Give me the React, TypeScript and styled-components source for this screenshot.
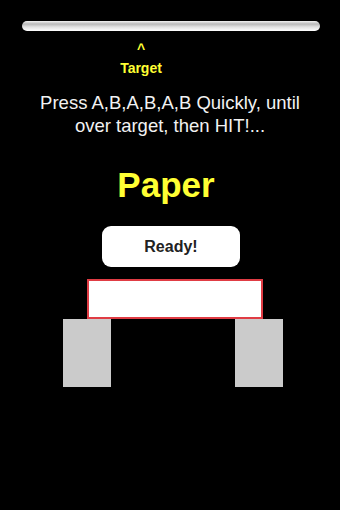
import React from 'react'
import styled, { createGlobalStyle } from 'styled-components'

const Global = createGlobalStyle`
  html, body {
    margin: 0;
    padding: 0;
    background: #000;
  }
  body {
    font-family: 'Liberation Sans', Arial, sans-serif;
  }
`

const Screen = styled.div`
  width: 340px;
  height: 510px;
  background: #000;
  display: flex;
  flex-direction: column;
  overflow: hidden;
`

const Meter = styled.div`
  margin: 21px 20px 0 22px;
  height: 10px;
  border-radius: 5px;
  background: linear-gradient(#f4f4f4 0%, #b9b9b9 30%, #e2e2e2 60%, #ffffff 100%);
`

const Marker = styled.div`
  width: 44px;
  margin: 11px 0 0 119px;
  display: flex;
  flex-direction: column;
  align-items: center;
  color: #ffff33;
  font-weight: bold;
  font-size: 14px;
  line-height: 14px;
  .label {
    margin-top: 5px;
  }
`

const Hint = styled.div`
  margin-top: 16px;
  text-align: center;
  color: #f2f2f2;
  font-size: 18.5px;
  line-height: 23px;
  white-space: nowrap;
`

const Word = styled.div`
  margin-top: 28px;
  padding-right: 8px;
  text-align: center;
  color: #ffff33;
  font-weight: bold;
  font-size: 35px;
  line-height: 40px;
`

const ReadyButton = styled.button`
  align-self: flex-start;
  margin: 21px 0 0 102px;
  width: 138px;
  height: 41px;
  border: none;
  border-radius: 9px;
  background: #fff;
  color: #222;
  font-family: 'Liberation Sans', Arial, sans-serif;
  font-weight: bold;
  font-size: 16px;
  padding: 0;
`

const Stand = styled.div`
  margin: 12px 0 0 63px;
  width: 220px;
  display: flex;
  flex-direction: column;
`

const Board = styled.div`
  width: 176px;
  height: 40px;
  margin-left: 24px;
  box-sizing: border-box;
  background: #fff;
  border: 2px solid #e03c44;
`

const Legs = styled.div`
  display: flex;
  justify-content: space-between;
`

const Leg = styled.div`
  width: 48px;
  height: 68px;
  background: #cbcbcb;
`

export default function App() {
  return (
    <Screen>
      <Global />
      <Meter />
      <Marker>
        <span>^</span>
        <span className="label">Target</span>
      </Marker>
      <Hint>
        Press A,B,A,B,A,B Quickly, until
        <br />
        over target, then HIT!...
      </Hint>
      <Word>Paper</Word>
      <ReadyButton>Ready!</ReadyButton>
      <Stand>
        <Board />
        <Legs>
          <Leg />
          <Leg />
        </Legs>
      </Stand>
    </Screen>
  )
}
